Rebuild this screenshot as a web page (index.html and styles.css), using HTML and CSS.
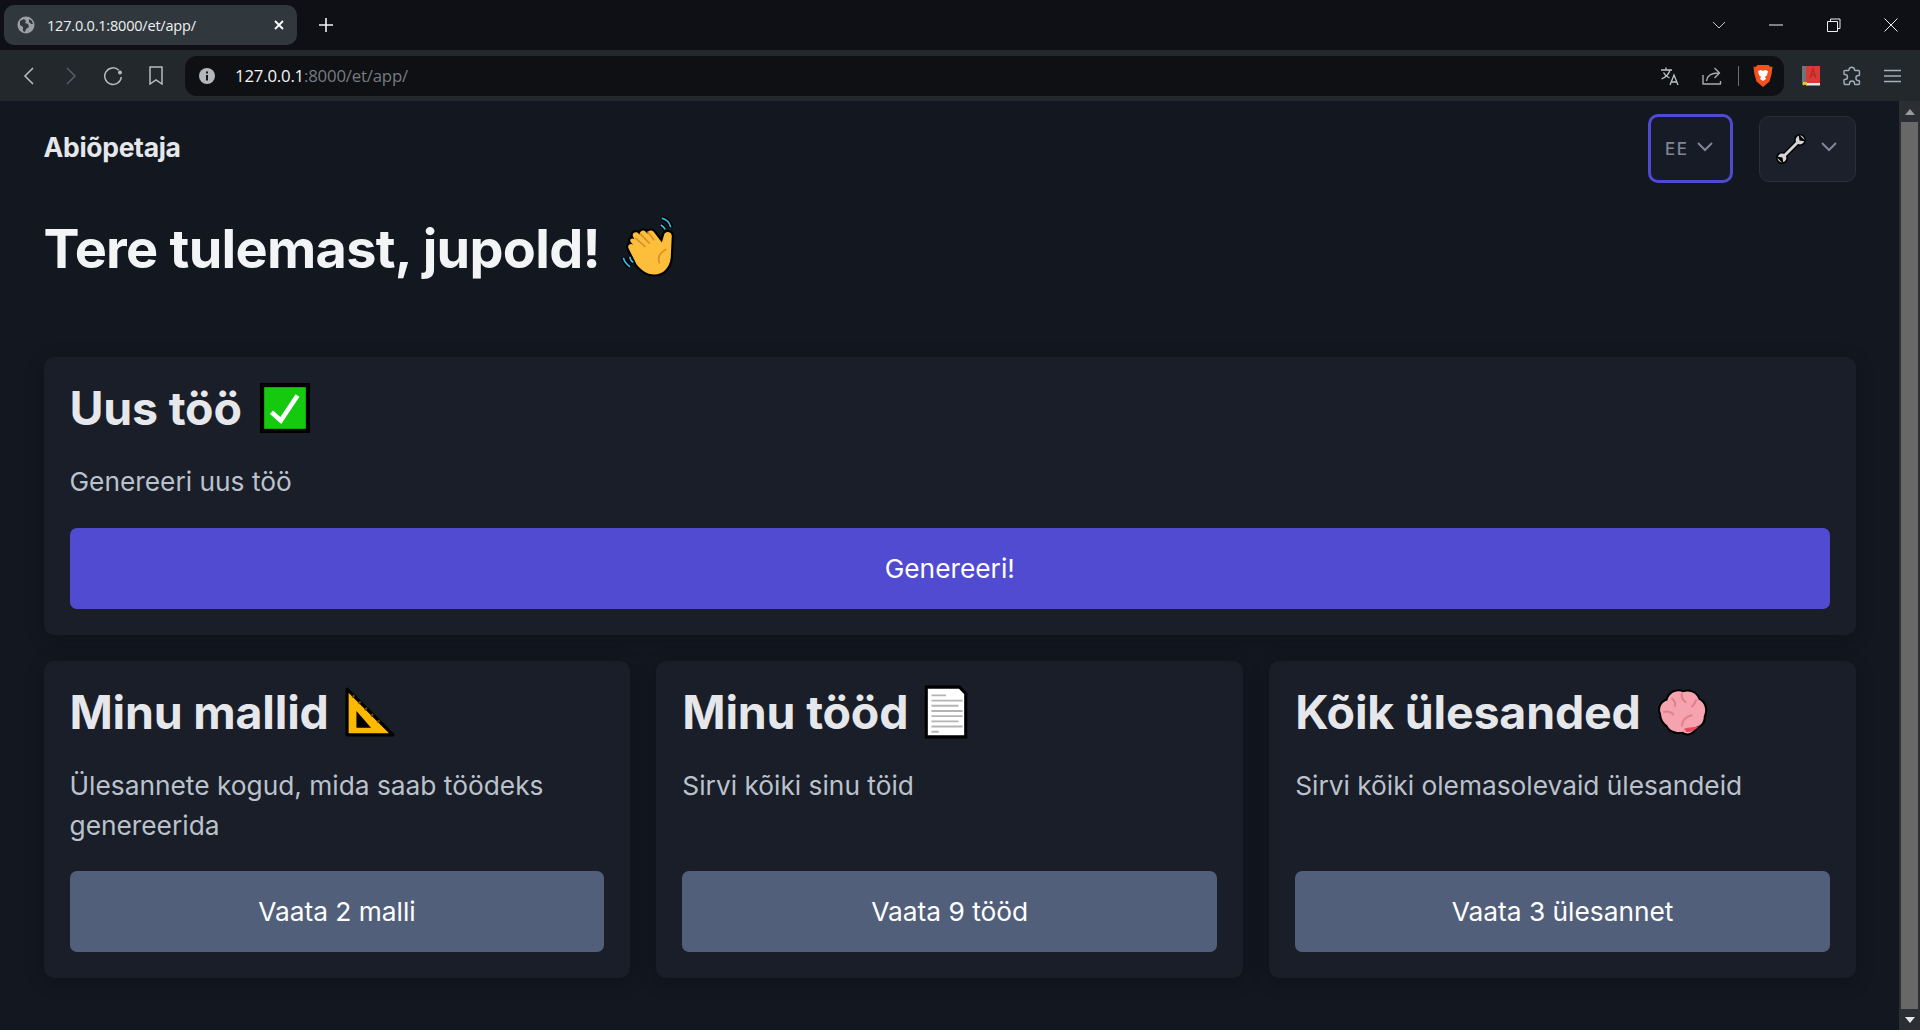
FILE: index.html
```html
<!DOCTYPE html>
<html lang="et">
<head>
    <meta charset="UTF-8">
    <title>Abiõpetaja</title>
    <link rel="stylesheet" href="styles.css">
</head>
<body>
    <div class="titlebar">
        <div class="tab">
            <svg class="tab-globe" viewBox="0 0 18 18"><circle cx="9" cy="9" r="8.500" fill="#9ba0a5"/><path d="M3 5l4-2 2 2-1 2 3 1 1 3-3 2-1 3-2-1V11L3 9zM12 3l3 2 1 3-2 0-2-2z" fill="#30383e"/></svg>
            <span class="tab-title">127.0.0.1:8000/et/app/</span>
            <svg class="tab-close" viewBox="0 0 10 10"><path d="M1 1l8 8M9 1l-8 8" stroke="#fff" stroke-width="1.800" fill="none"/></svg>
        </div>
        <div class="new-tab">
            <svg viewBox="0 0 16 16" width="16" height="16"><path d="M8 1v14M1 8h14" stroke="#f2f2f2" stroke-width="1.600" fill="none"/></svg>
        </div>
        <div class="window-controls">
            <div class="win-btn"><svg viewBox="0 0 14 8" width="14" height="8"><path d="M1 1l6 6 6-6" stroke="#c8c8c8" fill="none"/></svg></div>
            <div class="win-btn"><svg viewBox="0 0 14 2" width="14" height="2"><path d="M0 1h14" stroke="#eee" fill="none"/></svg></div>
            <div class="win-btn"><svg viewBox="0 0 14 14" width="14" height="14"><path d="M3.500 3V1h9.500v9.500h-2M.5 3.500h10v10H.5z" stroke="#eee" fill="none"/></svg></div>
            <div class="win-btn"><svg viewBox="0 0 14 14" width="14" height="14"><path d="M.5.500l13 13M13.500.500l-13 13" stroke="#eee" fill="none"/></svg></div>
        </div>
    </div>

    <div class="toolbar">
        <div class="tool-btn"><svg viewBox="0 0 12 20" width="12" height="20"><path d="M10 2L2 10l8 8" stroke="#b6bbbf" stroke-width="1.600" fill="none"/></svg></div>
        <div class="tool-btn"><svg viewBox="0 0 12 20" width="12" height="20"><path d="M2 2l8 8-8 8" stroke="#555b60" stroke-width="1.600" fill="none"/></svg></div>
        <div class="tool-btn"><svg viewBox="0 0 20 20" width="20" height="20"><path d="M15.800 4.200A8.300 8.300 0 1 0 18.300 11" stroke="#b6bbbf" stroke-width="1.500" fill="none"/><circle cx="17" cy="6.500" r="2" fill="#b6bbbf"/></svg></div>
        <div class="tool-btn bookmark"><svg viewBox="0 0 14 19" width="14" height="19"><path d="M1 1h12v17l-6-4-6 4z" stroke="#b6bbbf" stroke-width="1.500" fill="none"/></svg></div>
        <div class="omnibox">
            <svg class="omni-info" viewBox="0 0 16 16"><circle cx="8" cy="8" r="8" fill="#b4b8bc"/><path d="M8 3.500v2M8 7v5.500" stroke="#15181c" stroke-width="2" fill="none"/></svg>
            <span class="url"><span class="url-host">127.0.0.1</span>:8000/et/app/</span>
            <div class="omni-icons">
                <svg viewBox="0 0 20 20" width="20" height="20"><path d="M1 4h11M6 1.500V4M10 4c-1 4-4 7-8.500 9M3.500 6.500C5 9.500 7 11 9.500 12M10 19l4-10 4 10M11.500 16h5" stroke="#bfc3c6" stroke-width="1.300" fill="none"/></svg>
                <svg viewBox="0 0 20 20" width="20" height="20"><path d="M1 9v9h17.500V15M4.500 15c.5-5 4-8 12-8M12.500 2l5 5-5 5" stroke="#a9adb1" stroke-width="1.400" fill="none" stroke-linejoin="round"/></svg>
                <span class="omni-sep"></span>
                <svg viewBox="0 0 20 24" width="20" height="24"><path d="M4.500 1h11l2 2 2-.500-.800 7-2.200 8-6.500 5.500L3.500 17.500l-2.200-8-.800-7 2 .500z" fill="#f4511e"/><path d="M5 7l3-1 2 1 2-1 3 1-1 4-2 2 1 2-3 2-3-2 1-2-2-2z" fill="#fff"/></svg>
            </div>
        </div>
        <div class="ext-btn"><svg viewBox="0 0 18 22" width="18" height="22"><path d="M0 1h4v19H0z" fill="#70757a"/><path d="M4 1h14v17H4z" fill="#d83a35"/><path d="M4 18h14v2.500H4z" fill="#e8e8e8"/><path d="M8 13l3-9 3 9M9 10h4" stroke="#b92b28" stroke-width="1.500" fill="none"/><path d="M1 17h4v3.500l-2-1-2 1z" fill="#f0c020"/></svg></div>
        <div class="ext-btn"><svg viewBox="0 0 20 20" width="20" height="20"><path d="M7 3.500a2.800 2.800 0 0 1 5.500 0c0 .5 0 1 .5 1h3.500c.8 0 1 .5 1 1V9c0 .5-.5.500-1 .500a2.600 2.600 0 0 0 0 5.200c.5 0 1 0 1 .5v2.300c0 .5-.5 1-1 1H13c-.5 0-.5-.5-.5-1a2.500 2.500 0 0 0-5 0c0 .5 0 1-.5 1H3.500c-.8 0-1.500-.5-1.500-1.500V14c0-.5.500-.5 1-.500a2.500 2.500 0 0 0 0-5c-.5 0-1 0-1-.5V5.500c0-.5.500-1 1-1H6.500c.5 0 .5-.5.5-1z" stroke="#9fb0b8" stroke-width="1.400" fill="none"/></svg></div>
        <div class="ext-btn"><svg viewBox="0 0 17 14" width="17" height="14"><path d="M0 1.500h17M0 7h17M0 12.500h17" stroke="#9fb0b8" stroke-width="1.500" fill="none"/></svg></div>
    </div>

    <div class="viewport">
        <main class="page">
            <nav class="navbar">
                <span class="brand">Abiõpetaja</span>
                <div class="nav-actions">
                    <div class="lang-select">
                        <span>EE</span>
                        <svg class="chev" viewBox="0 0 16 10"><path d="M1 1l7 7 7-7" stroke="#7d8798" stroke-width="2" fill="none"/></svg>
                    </div>
                    <div class="tool-select">
                        <svg class="wrench" viewBox="0 0 30 30">
                            <path d="M7 23L23 7" stroke="#000" stroke-width="5.500"/>
                            <circle cx="24" cy="6" r="6" fill="#000"/>
                            <circle cx="6" cy="24" r="6" fill="#000"/>
                            <path d="M7 23L23 7" stroke="#d4d4d4" stroke-width="2.800"/>
                            <circle cx="24" cy="6" r="4.400" fill="#d4d4d4"/>
                            <circle cx="6" cy="24" r="4.400" fill="#d4d4d4"/>
                            <path d="M23.500 6.500L22.500 0 30 7.500zM6.500 23.500L0 22.500 7.500 30z" fill="#000"/>
                        </svg>
                        <svg class="chev" viewBox="0 0 16 10"><path d="M1 1l7 7 7-7" stroke="#7d8798" stroke-width="2" fill="none"/></svg>
                    </div>
                </div>
            </nav>

            <h1 class="welcome">Tere tulemast, jupold!
                <svg class="emoji-hand" viewBox="0 0 56 60">
                    <path d="M9 25c-2-2 0-5 3-3l-1-2c-2-3 2-6 5-3l1 1c-1-3 3-5 5-3l2 2c0-3 4-4 6-1l7 9 2-7c1-4 7-3 7 1l-1 20c-1 9-7 15-15 15-7 0-12-4-16-9L7 31c-2-3 1-6 4-4z" fill="#fdbe3c" stroke="#000" stroke-width="4" paint-order="stroke" stroke-linejoin="round"/>
                    <path d="M13 21l9 8M17 17l9 9M24 15l6 8M35 44c-2-4-1-9 6-13" stroke="#d99025" stroke-width="1.500" fill="none"/>
                    <path d="M37 3c4 1 7 4 8 8M36 9c2 1 3 2 4 4M2 39c1 4 3 6 6 8M8 38c0 2 1 4 3 5" stroke="#000" stroke-width="4.500" fill="none"/>
                    <path d="M37 3c4 1 7 4 8 8M36 9c2 1 3 2 4 4M2 39c1 4 3 6 6 8M8 38c0 2 1 4 3 5" stroke="#35c2e8" stroke-width="1.500" fill="none"/>
                </svg>
            </h1>

            <section class="card">
                <h2 class="card-title">Uus töö
                    <svg class="emoji emoji-check" viewBox="0 0 48 48"><rect x="2" y="2" width="44" height="44" fill="#15c90f" stroke="#000" stroke-width="4"/><path d="M11 28l9 8L36 12" stroke="#fff" stroke-width="4.500" fill="none"/></svg>
                </h2>
                <p class="card-text">Genereeri uus töö</p>
                <a class="btn btn-primary">Genereeri!</a>
            </section>

            <div class="card-grid">
                <section class="card">
                    <h2 class="card-title">Minu mallid
                        <svg class="emoji" viewBox="0 0 48 48"><path d="M2 2l44 44H2z" fill="#fdb800" stroke="#000" stroke-width="3" stroke-linejoin="round"/><path d="M11 23l14 16H11z" fill="#000"/><path d="M7 10l2-2M13 16l2-2M19 22l2-2M25 28l2-2M31 34l2-2" stroke="#6b4e00" stroke-width="2"/></svg>
                    </h2>
                    <p class="card-text">Ülesannete kogud, mida saab töödeks genereerida</p>
                    <a class="btn btn-gray">Vaata 2 malli</a>
                </section>
                <section class="card">
                    <h2 class="card-title">Minu tööd
                        <svg class="emoji emoji-doc" viewBox="0 0 42 52"><path d="M2 2h32l6 6v42H2z" fill="#fff" stroke="#000" stroke-width="3"/><path d="M7 10h14M7 15h30M7 20h26M7 25h30M7 30h30M7 35h26M7 40h30M7 45h7" stroke="#b4b4b4" stroke-width="1.800"/></svg>
                    </h2>
                    <p class="card-text">Sirvi kõiki sinu töid</p>
                    <a class="btn btn-gray">Vaata 9 tööd</a>
                </section>
                <section class="card">
                    <h2 class="card-title">Kõik ülesanded
                        <svg class="emoji emoji-brain" viewBox="0 0 50 48"><path d="M4 26c-3-6 1-12 6-13 1-6 8-11 15-8 7-2 13 1 15 7 6 3 8 10 5 16 0 6-3 9-7 10-4 7-9 8-13 5-7 1-13-1-15-6-3-2-6-6-6-11z" fill="#f5a3ae" stroke="#000" stroke-width="4" stroke-linejoin="round" paint-order="stroke"/><path d="M28 43c4 1 9-1 12-5-3 0-9 1-14 2z" fill="#e6495d"/><path d="M14 11c3 2 4 5 3 8M24 6c-1 4 1 7 4 9M38 12c-2 3-2 6-5 7M6 24c4-1 8 0 10 3M24 38c0-6 4-10 10-11" stroke="#e27f8d" stroke-width="2" fill="none"/></svg>
                    </h2>
                    <p class="card-text">Sirvi kõiki olemasolevaid ülesandeid</p>
                    <a class="btn btn-gray">Vaata 3 ülesannet</a>
                </section>
            </div>
        </main>

        <div class="scrollbar">
            <div class="scroll-arrow"><svg viewBox="0 0 10 6" width="10" height="6"><path d="M5 0l5 6H0z" fill="#9a9a9a"/></svg></div>
            <div class="scroll-thumb"></div>
            <div class="scroll-arrow"><svg viewBox="0 0 10 6" width="10" height="6"><path d="M0 0h10L5 6z" fill="#e8e8e8"/></svg></div>
        </div>
    </div>
</body>
</html>
```

FILE: styles.css
```css
html, body {
    height: 100%;
}

body {
    margin: 0;
    display: flex;
    flex-direction: column;
    overflow: hidden;
    background-color: #121720;
    font-family: Inter, "Liberation Sans", sans-serif;
}

/* Browser chrome */
.titlebar {
    height: 50px;
    flex: none;
    display: flex;
    align-items: flex-start;
    background-color: #0e1015;
}

.tab {
    width: 293px;
    height: 40px;
    margin: 5px 0 0 4px;
    padding: 0 13px;
    box-sizing: border-box;
    display: flex;
    align-items: center;
    background-color: #30383e;
    border-radius: 10px;
}

.tab-globe {
    width: 18px;
    height: 18px;
    margin-right: 12px;
}

.tab-title {
    flex: 1;
    font-family: "Open Sans", sans-serif;
    font-size: 14.500px;
    letter-spacing: -0.2px;
    color: #eef0f1;
}

.tab-close {
    width: 10px;
    height: 10px;
}

.new-tab {
    width: 42px;
    height: 50px;
    margin-left: 8px;
    display: flex;
    align-items: center;
    justify-content: center;
}

.window-controls {
    margin-left: auto;
    display: flex;
}

.win-btn {
    width: 57.500px;
    height: 50px;
    display: flex;
    align-items: center;
    justify-content: center;
}

.toolbar {
    height: 51px;
    flex: none;
    padding: 0 7px 0 8px;
    box-sizing: border-box;
    display: flex;
    align-items: center;
    background-color: #22282c;
}

.tool-btn {
    width: 42px;
    display: flex;
    justify-content: center;
}

.bookmark {
    padding-left: 2px;
    box-sizing: border-box;
}

.omnibox {
    flex: 1;
    height: 40px;
    margin: 0 6px 0 9px;
    padding: 0 11px 0 14px;
    display: flex;
    align-items: center;
    background-color: #0e1013;
    border-radius: 12px;
}

.omni-info {
    width: 16px;
    height: 16px;
    margin-right: 20px;
}

.url {
    margin-bottom: 1px;
    font-family: "Open Sans", sans-serif;
    font-size: 16.800px;
    letter-spacing: -0.2px;
    color: #777c81;
}

.url-host {
    color: #f4f5f6;
}

.omni-icons {
    margin-left: auto;
    display: flex;
    align-items: center;
    gap: 22px;
}

.omni-sep {
    width: 1px;
    height: 20px;
    margin: 0 -8px 0 -6px;
    background-color: #6a6f74;
}

.ext-btn {
    width: 41px;
    display: flex;
    justify-content: center;
}

/* Page */
.viewport {
    flex: 1;
    min-height: 0;
    display: flex;
}

.page {
    flex: 1;
    padding: 13px 43px 0 43.500px;
}

.navbar {
    height: 69px;
    display: flex;
    align-items: center;
    justify-content: space-between;
}

.brand {
    margin-bottom: 4px;
    font-size: 26.500px;
    font-weight: 700;
    letter-spacing: -0.3px;
    color: #e5e7eb;
}

.nav-actions {
    display: flex;
    align-items: center;
    gap: 26px;
}

.lang-select,
.tool-select {
    display: flex;
    align-items: center;
    box-sizing: border-box;
    background-color: #161b25;
    border-radius: 10px;
}

.lang-select {
    width: 85px;
    height: 69px;
    padding-left: 14px;
    gap: 8px;
    border: 3px solid #4f4bd0;
    font-size: 17px;
    font-weight: 500;
    letter-spacing: 1.500px;
    color: #7d8798;
}

.tool-select {
    width: 97px;
    height: 66px;
    padding-left: 16px;
    gap: 15px;
    background-color: #1b202b;
    border: 1px solid #2a303c;
}

.chev {
    width: 16px;
    height: 10px;
    margin-bottom: 3px;
}

.wrench {
    width: 30px;
    height: 30px;
}

.welcome {
    margin: 0 0 44px;
    height: 130px;
    display: flex;
    align-items: center;
    gap: 21px;
    font-size: 54px;
    font-weight: 700;
    letter-spacing: -0.7px;
    color: #f3f4f6;
}

.emoji-hand {
    width: 62px;
    height: 66px;
}

.card {
    padding: 26px;
    display: flex;
    flex-direction: column;
    background-color: #191e28;
    border-radius: 10px;
    box-shadow: 0 4px 20px rgba(0, 0, 0, 0.2);
}

.card-title {
    margin: 0 0 29px;
    height: 50px;
    display: flex;
    align-items: center;
    gap: 16px;
    font-size: 46.500px;
    font-weight: 700;
    letter-spacing: -0.2px;
    color: #e5e7eb;
}

.emoji {
    width: 50px;
    height: 50px;
}

.emoji-check {
    margin-left: 2px;
}

.emoji-doc {
    width: 44px;
    height: 54px;
}

.emoji-brain {
    width: 52px;
    height: 50px;
}

.card-text {
    margin: 0 0 26px;
    flex: 1;
    font-size: 26.300px;
    line-height: 40px;
    color: #bcc2cc;
}

.btn {
    height: 81px;
    display: flex;
    align-items: center;
    justify-content: center;
    border-radius: 7px;
    font-size: 26.300px;
    font-weight: 400;
    color: #fff;
}

.btn-primary {
    background-color: #504bd1;
}

.btn-gray {
    background-color: #525f7a;
}

.card-grid {
    margin-top: 26px;
    display: grid;
    grid-template-columns: repeat(3, 1fr);
    gap: 26px;
}

.card-grid .card-text {
    margin-bottom: 25px;
}

/* Scrollbar */
.scrollbar {
    width: 21px;
    flex: none;
    display: flex;
    flex-direction: column;
    background-color: #2b2e33;
}

.scroll-arrow {
    height: 21px;
    display: flex;
    align-items: center;
    justify-content: center;
}

.scroll-thumb {
    flex: 1;
    margin: 0 2px;
    background-color: #686868;
}
```
